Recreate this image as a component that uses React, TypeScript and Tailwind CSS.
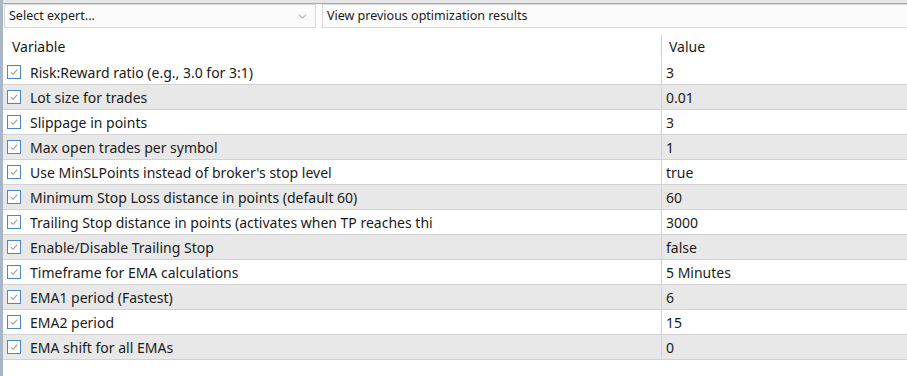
import { ChevronDown } from "lucide-react";

const rows: [string, string][] = [
  ["Risk:Reward ratio (e.g., 3.0 for 3:1)", "3"],
  ["Lot size for trades", "0.01"],
  ["Slippage in points", "3"],
  ["Max open trades per symbol", "1"],
  ["Use MinSLPoints instead of broker's stop level", "true"],
  ["Minimum Stop Loss distance in points (default 60)", "60"],
  ["Trailing Stop distance in points (activates when TP reaches thi", "3000"],
  ["Enable/Disable Trailing Stop", "false"],
  ["Timeframe for EMA calculations", "5 Minutes"],
  ["EMA1 period (Fastest)", "6"],
  ["EMA2 period", "15"],
  ["EMA shift for all EMAs", "0"],
];

function Check() {
  return (
    <span className="flex h-[14px] w-[14px] shrink-0 items-center justify-center border border-[#4a86c8] bg-white">
      <svg width="10" height="10" viewBox="0 0 10 10" fill="none">
        <path d="M2 5.3 L4.1 7.3 L8.2 2.6" stroke="#9a9a9a" strokeWidth="1.1" />
      </svg>
    </span>
  );
}

export default function App() {
  return (
    <div className="flex h-[376px] w-[907px] overflow-hidden bg-[#f0f0f0] font-['Noto_Sans',sans-serif] text-[14px] text-[#1a1a1a]">
      <div className="w-[3px] shrink-0 bg-[#a9b6c8]" />
      <div className="flex min-w-0 flex-1 flex-col bg-white">
        <div className="h-[3px] bg-[#e6e6e6]" />
        <div className="flex h-[25px] gap-[6px] border-t border-[#a8a8a8] bg-white pl-[1px] text-[12.5px]">
          <div className="flex h-[24px] w-[312px] items-center justify-between border border-[#d9d9d9] bg-[#fbfbfb] pl-[4px] pr-[6px]">
            <span>Select expert...</span>
            <ChevronDown size={13} strokeWidth={1.2} className="text-[#555]" />
          </div>
          <div className="flex h-[24px] flex-1 items-center border border-r-0 border-[#d9d9d9] bg-[#fbfbfb] pl-[4px]">
            View previous optimization results
          </div>
        </div>
        <div className="mt-[6px] flex h-[25px] items-center pl-[1px]">
          <div className="w-[657px] pl-[8px]">Variable</div>
          <div className="h-[24px] w-px bg-[#cfcfcf]" />
          <div className="pl-[7px]">Value</div>
        </div>
        <div className="mt-[1px] flex flex-col">
          {rows.map(([name, value], i) => (
            <div
              key={name}
              className={`flex h-[25px] items-center border-b border-[#d2d2d2] ${i % 2 === 1 ? "bg-[#e8e8e8]" : "bg-white"}`}
            >
              <div className="flex w-[658px] items-center gap-[9px] pl-[4px]">
                <Check />
                <span className="truncate">{name}</span>
              </div>
              <div className="h-full w-px bg-[#d2d2d2]" />
              <div className="pl-[4px]">{value}</div>
            </div>
          ))}
        </div>
      </div>
    </div>
  );
}
